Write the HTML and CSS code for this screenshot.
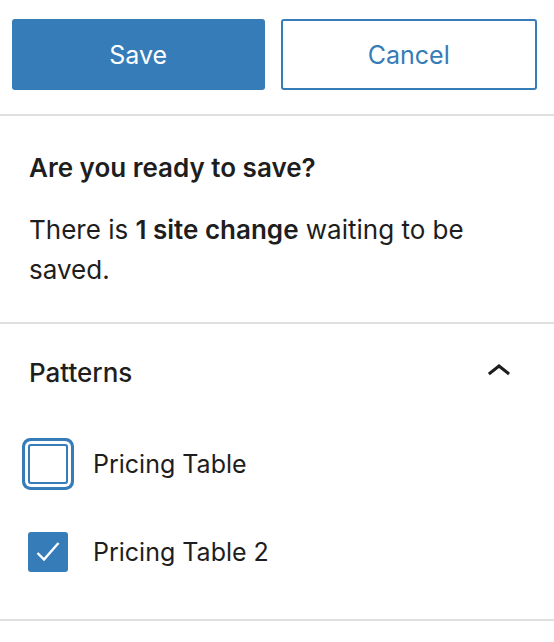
FILE: index.html
```html
<!DOCTYPE html>
<html lang="en">
<head>
    <meta charset="UTF-8">
    <meta name="viewport" content="width=device-width, initial-scale=1.0">
    <title>Save changes</title>
    <link rel="stylesheet" href="styles.css">
</head>
<body>
    <div class="panel">
        <div class="actions">
            <button class="btn btn-primary">Save</button>
            <button class="btn btn-secondary">Cancel</button>
        </div>

        <div class="section">
            <h2 class="section-title">Are you ready to save?</h2>
            <p class="section-text">There is <strong>1 site change</strong> waiting to be saved.</p>
        </div>

        <div class="section patterns">
            <div class="patterns-header">
                <span class="patterns-title">Patterns</span>
                <svg class="chevron" width="48" height="48" viewBox="0 0 24 24">
                    <path d="M6.5 12.4L12 8l5.5 4.4-.9 1.2L12 10l-4.6 3.6-1-1.2z" fill="#1e1e1e"/>
                </svg>
            </div>
            <ul class="pattern-list">
                <li class="pattern-item">
                    <span class="checkbox focused"></span>
                    <span class="pattern-label">Pricing Table</span>
                </li>
                <li class="pattern-item">
                    <span class="checkbox checked">
                        <svg width="40" height="40" viewBox="0 0 40 40">
                            <path d="M9.5 21 L16 27.5 L30.5 11" fill="none" stroke="#fff" stroke-width="2.4"/>
                        </svg>
                    </span>
                    <span class="pattern-label">Pricing Table 2</span>
                </li>
            </ul>
        </div>
    </div>
</body>
</html>
```

FILE: styles.css
```css
* {
    margin: 0;
    padding: 0;
    box-sizing: border-box;
}
body {
    background: #ffffff;
    color: #1e1e1e;
    font-family: Inter, "Noto Sans", sans-serif;
}
.panel {
    width: 554px;
}
.actions {
    display: flex;
    gap: 16px;
    padding: 19px 17px 24px 12px;
    border-bottom: 2px solid #e0e0e0;
}
.btn {
    flex: 1;
    height: 71px;
    border-radius: 3px;
    font-family: Inter, "Noto Sans", sans-serif;
    font-size: 25px;
    font-weight: 400;
    cursor: pointer;
}
.btn-primary {
    background: #357cb8;
    color: #ffffff;
    border: none;
}
.btn-secondary {
    background: #ffffff;
    color: #357cb8;
    border: 2px solid #357cb8;
}
.section {
    padding: 36px 29px 32px;
    border-bottom: 2px solid #e0e0e0;
}
.section-title {
    font-size: 26px;
    font-weight: 600;
    line-height: 32px;
    margin-bottom: 26px;
}
.section-text {
    font-size: 26px;
    line-height: 40px;
}
.section-text strong {
    font-weight: 600;
}
.patterns {
    padding: 28px 29px 47px;
}
.patterns-header {
    display: flex;
    align-items: center;
    justify-content: space-between;
    height: 40px;
    margin-bottom: 52px;
}
.patterns-title {
    font-size: 26px;
    font-weight: 500;
}
.chevron {
    margin-right: 2px;
}
.pattern-list {
    list-style: none;
    display: flex;
    flex-direction: column;
    gap: 48px;
}
.pattern-item {
    display: flex;
    align-items: center;
    gap: 25px;
    height: 40px;
}
.checkbox {
    width: 40px;
    height: 40px;
    border-radius: 3px;
    flex-shrink: 0;
    margin-left: -1px;
}
.checkbox.focused {
    border: 2px solid #357cb8;
    box-shadow: 0 0 0 3px #ffffff, 0 0 0 6px #357cb8;
}
.checkbox.checked {
    background: #357cb8;
}
.checkbox svg {
    display: block;
}
.pattern-label {
    font-size: 25px;
}
```
